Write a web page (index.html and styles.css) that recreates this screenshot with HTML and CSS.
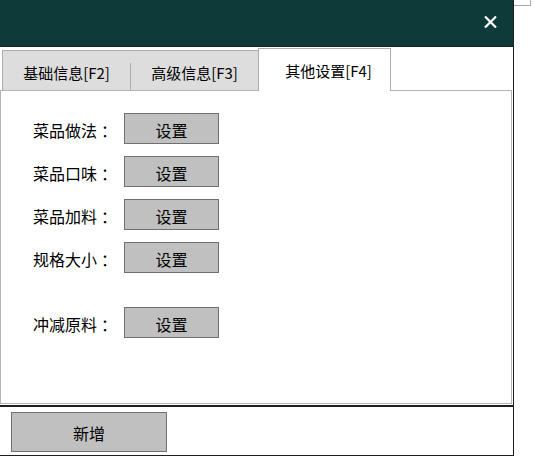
FILE: index.html
```
<!DOCTYPE html>
<html lang="zh-CN">
<head>
<meta charset="utf-8">
<title>其他设置</title>
<link rel="stylesheet" href="styles.css">
</head>
<body>
  <div class="window">
    <header class="titlebar">
      <button class="close" aria-label="关闭">
        <svg width="13" height="12" viewBox="0 0 13 12"><path d="M1 0.5 L12 11.5 M12 0.5 L1 11.5" stroke="#fff" stroke-width="2.2" fill="none"/></svg>
      </button>
    </header>
    <nav class="tabs">
      <span class="tab-lead"></span>
      <span class="tab">基础信息[F2]</span>
      <span class="tab tab-mid">高级信息[F3]</span>
      <span class="tab tab-active">其他设置[F4]</span>
      <span class="tab-fill"></span>
    </nav>
    <section class="panel">
      <div class="row"><span class="label">菜品做法<span class="colon">：</span></span><button class="btn">设置</button></div>
      <div class="row"><span class="label">菜品口味<span class="colon">：</span></span><button class="btn">设置</button></div>
      <div class="row"><span class="label">菜品加料<span class="colon">：</span></span><button class="btn">设置</button></div>
      <div class="row"><span class="label">规格大小<span class="colon">：</span></span><button class="btn">设置</button></div>
      <div class="row row-spaced"><span class="label">冲减原料<span class="colon">：</span></span><button class="btn">设置</button></div>
    </section>
    <footer class="footer">
      <button class="btn btn-add">新增</button>
    </footer>
  </div>
  <div class="side"><div class="side-edge"></div></div>
</body>
</html>
```
FILE: styles.css
```
html, body {
  margin: 0;
  padding: 0;
  background: #ffffff;
}
body {
  display: flex;
  align-items: flex-start;
  width: 535px;
  height: 466px;
  overflow: hidden;
  font-family: "Noto Sans CJK SC", "Microsoft YaHei", sans-serif;
  color: #000;
}
.window {
  width: 513px;
  background: #fff;
  border-right: 1px solid #1e1e1e;
  border-bottom: 1px solid #1e1e1e;
}
.titlebar {
  height: 46px;
  background: #0e3a3a;
  border-bottom: 1px solid #1e1e1e;
  display: flex;
  align-items: center;
  justify-content: flex-end;
  padding-right: 16px;
}
.close {
  background: none;
  border: 0;
  padding: 0;
  margin-top: -2px;
  width: 13px;
  height: 12px;
  display: flex;
}
.tabs {
  display: flex;
  align-items: flex-end;
  height: 44px;
  width: 512px;
  font-size: 15px;
}
.tab-lead {
  width: 2px;
  height: 0;
  border-bottom: 1px solid #b4b4b4;
}
.tab {
  box-sizing: border-box;
  height: 41px;
  width: 128px;
  background: #dddddd;
  border-top: 1px solid #adadad;
  border-left: 1px solid #adadad;
  border-bottom: 1px solid #b4b4b4;
  display: flex;
  align-items: center;
  justify-content: center;
  padding-top: 3px;
  white-space: nowrap;
}
.tab-mid {
  border-left: 0;
  padding-left: 1px;
  background: linear-gradient(#adadad, #adadad) no-repeat left bottom / 1px 27px, #dddddd;
}
.tab-active {
  width: 133px;
  height: 43px;
  background: #fff;
  border: 1px solid #adadad;
  border-bottom: 0;
  padding-top: 0;
  padding-left: 8px;
}
.tab-fill {
  flex: 1;
  height: 0;
  border-bottom: 1px solid #b4b4b4;
}
.panel {
  box-sizing: border-box;
  width: 512px;
  height: 313px;
  border: 1px solid #b4b4b4;
  border-top: 0;
  padding: 22px 0 0 32px;
  display: flex;
  flex-direction: column;
  gap: 12px;
}
.row {
  display: flex;
  align-items: center;
  height: 31px;
}
.row-spaced {
  margin-top: 22px;
}
.label {
  width: 91px;
  font-size: 16px;
  padding-top: 3px;
  white-space: nowrap;
}
.colon {
  padding-left: 4px;
}
.btn {
  box-sizing: border-box;
  width: 95px;
  height: 31px;
  background: #c0c0c0;
  border: 1px solid #707070;
  font-family: inherit;
  font-size: 16px;
  color: #000;
  padding: 2px 0 0;
  margin: 0;
}
.footer {
  margin-top: 1px;
  border-top: 2px solid #1e1e1e;
  height: 50px;
  box-sizing: border-box;
  padding: 5px 0 0 11px;
}
.btn-add {
  width: 156px;
  height: 40px;
}
.side {
  width: 21px;
}
.side-edge {
  width: 16px;
  height: 5px;
  border-bottom: 1px solid #a8a8a8;
  border-right: 1px solid #a8a8a8;
}
```
